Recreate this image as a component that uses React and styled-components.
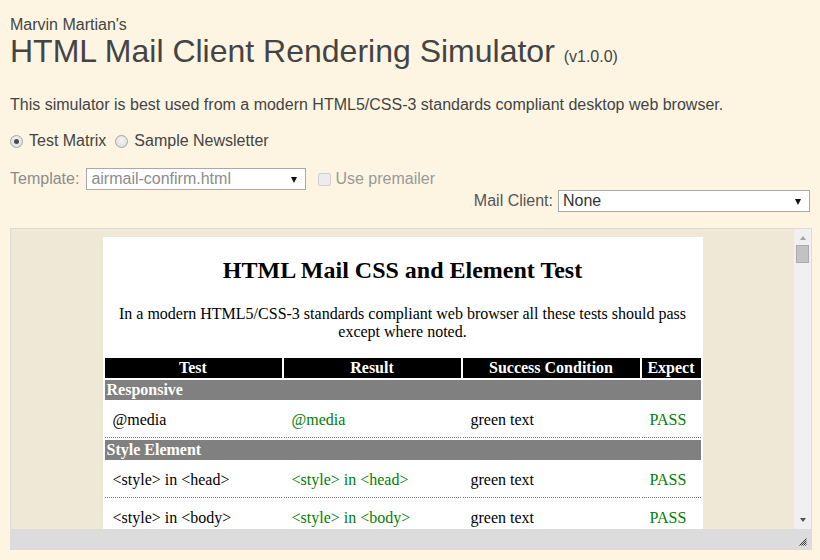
import React from "react";
import styled, { createGlobalStyle } from "styled-components";

const Global = createGlobalStyle`
  html, body { margin: 0; padding: 0; background: #fdf5e2; }
  body { font-family: "Liberation Sans", Arial, sans-serif; color: #444; }
  * { box-sizing: border-box; }
`;

const Page = styled.div`
  width: 820px;
  height: 560px;
  padding: 16px 10px 0;
  overflow: hidden;
  background: #fdf5e2;
`;

const Subtitle = styled.div`
  font-size: 16px;
  line-height: 18px;
`;

const Title = styled.h1`
  margin: 0;
  font-size: 32px;
  line-height: 34px;
  font-weight: normal;
  color: #444;
`;

const Version = styled.span`
  font-size: 16px;
`;

const Intro = styled.p`
  margin: 22px 0 0;
  font-size: 16px;
  line-height: 18px;
`;

const RadioRow = styled.div`
  margin-top: 18px;
  display: flex;
  align-items: center;
  font-size: 16px;
  line-height: 18px;
  gap: 9px;
`;

const RadioLabel = styled.label`
  display: flex;
  align-items: center;
  gap: 6px;
`;

const RadioDot = styled.span`
  width: 13px;
  height: 13px;
  border-radius: 50%;
  border: 1px solid #a6a6a6;
  background: radial-gradient(circle at 50% 40%, #f4f4f4 0%, #dadada 100%);
  display: inline-flex;
  align-items: center;
  justify-content: center;
  &::after {
    content: "";
    width: 5px;
    height: 5px;
    border-radius: 50%;
    background: ${(p) => (p.$checked ? "#4a4a4a" : "transparent")};
  }
`;

const TemplateRow = styled.div`
  margin-top: 18px;
  display: flex;
  align-items: center;
  height: 22px;
  font-size: 16px;
  line-height: 18px;
`;

const MutedLabel = styled.span`
  color: #8c8c8c;
  margin-right: 7px;
`;

const SelectBox = styled.div`
  position: relative;
  width: ${(p) => p.$w}px;
  height: 22px;
  border: 1px solid #a9a9a9;
  background: #fff;
  color: ${(p) => (p.$muted ? "#8c8c8c" : "#333")};
  font-size: 16px;
  line-height: 20px;
  padding-left: 4px;
  white-space: nowrap;
`;

const Arrow = styled.span`
  position: absolute;
  right: 8px;
  top: 8px;
  width: 0;
  height: 0;
  border-left: 3.5px solid transparent;
  border-right: 3.5px solid transparent;
  border-top: 6px solid #111;
`;

const CheckLabel = styled.label`
  display: flex;
  align-items: center;
  gap: 4px;
  margin-left: 12px;
  color: #999;
`;

const CheckBox = styled.span`
  width: 13px;
  height: 13px;
  border: 1px solid #cfcfcf;
  border-radius: 2px;
  background: #ececec;
`;

const ClientRow = styled.div`
  display: flex;
  justify-content: flex-end;
  align-items: center;
  height: 22px;
  font-size: 16px;
  line-height: 18px;
`;

const ClientLabel = styled.span`
  color: #555;
  margin-right: 5px;
`;

const Frame = styled.div`
  margin-top: 16px;
  width: 802px;
  height: 322px;
  border: 1px solid #dcdcdc;
  display: flex;
  flex-direction: column;
`;

const Viewport = styled.div`
  display: flex;
  height: 300px;
`;

const Canvas = styled.div`
  flex: 1;
  background: #efe8d6;
  padding: 8px 0 0;
  overflow: hidden;
`;

const Email = styled.div`
  width: 600px;
  margin: 0 auto;
  background: #fff;
  color: #000;
  font-family: "Liberation Serif", "Times New Roman", serif;
  padding-top: 19px;
  min-height: 300px;
`;

const EmailTitle = styled.h2`
  margin: 0 0 21px;
  font-size: 24px;
  line-height: 28px;
  font-weight: bold;
  text-align: center;
`;

const EmailIntro = styled.p`
  margin: 0 0 15px;
  font-size: 16px;
  line-height: 18px;
  text-align: center;
`;

const Table = styled.table`
  width: 600px;
  border-spacing: 2px;
  table-layout: fixed;
`;

const Th = styled.th`
  background: #000;
  color: #fff;
  font-size: 16px;
  line-height: 18px;
  padding: 1px;
  height: 20px;
  font-weight: bold;
  text-align: center;
`;

const Section = styled.td`
  background: #808080;
  color: #fff;
  font-weight: bold;
  font-size: 16px;
  line-height: 18px;
  padding: 1px 2px;
  height: 20px;
`;

const Td = styled.td`
  padding: 8px;
  font-size: 16px;
  line-height: 19px;
  border-bottom: 1px dotted #777;
  color: ${(p) => (p.$green ? "#008000" : "#000")};
  white-space: nowrap;
`;

const Scrollbar = styled.div`
  width: 17px;
  background: #f0f0f0;
  display: flex;
  flex-direction: column;
  align-items: center;
  padding-top: 7px;
`;

const ScrollArrow = styled.span`
  width: 0;
  height: 0;
  border-left: 3.5px solid transparent;
  border-right: 3.5px solid transparent;
  ${(p) =>
    p.$up
      ? "border-bottom: 4px solid #a3a3a3;"
      : "border-top: 4px solid #505050; margin-bottom: 7px;"}
`;

const Thumb = styled.span`
  margin-top: 5px;
  width: 13px;
  height: 18px;
  background: #c2c2c2;
  border: 1px solid #ababab;
`;

const Spacer = styled.span`
  flex: 1;
`;

const BottomBar = styled.div`
  height: 20px;
  background: #dcdcdc;
  display: flex;
  justify-content: flex-end;
  align-items: flex-end;
  padding: 0 4px 3px 0;
`;

const Grip = () => (
  <svg width="8" height="8" viewBox="0 0 8 8">
    <g stroke="#333" strokeWidth="1">
      <line x1="0.5" y1="7.5" x2="7.5" y2="0.5" />
      <line x1="2.5" y1="7.5" x2="7.5" y2="2.5" />
      <line x1="4.5" y1="7.5" x2="7.5" y2="4.5" />
      <line x1="6.5" y1="7.5" x2="7.5" y2="6.5" />
    </g>
  </svg>
);

const rows = [
  { section: "Responsive" },
  { test: "@media", result: "@media", cond: "green text", expect: "PASS" },
  { section: "Style Element" },
  { test: "<style> in <head>", result: "<style> in <head>", cond: "green text", expect: "PASS" },
  { test: "<style> in <body>", result: "<style> in <body>", cond: "green text", expect: "PASS" },
];

export default function App() {
  return (
    <>
      <Global />
      <Page>
        <Subtitle>Marvin Martian's</Subtitle>
        <Title>
          HTML Mail Client Rendering Simulator <Version>(v1.0.0)</Version>
        </Title>
        <Intro>
          This simulator is best used from a modern HTML5/CSS-3 standards compliant desktop web browser.
        </Intro>
        <RadioRow>
          <RadioLabel>
            <RadioDot $checked />
            Test Matrix
          </RadioLabel>
          <RadioLabel>
            <RadioDot />
            Sample Newsletter
          </RadioLabel>
        </RadioRow>
        <TemplateRow>
          <MutedLabel>Template:</MutedLabel>
          <SelectBox $w={220} $muted>
            airmail-confirm.html
            <Arrow />
          </SelectBox>
          <CheckLabel>
            <CheckBox />
            Use premailer
          </CheckLabel>
        </TemplateRow>
        <ClientRow>
          <ClientLabel>Mail Client:</ClientLabel>
          <SelectBox $w={252}>
            None
            <Arrow />
          </SelectBox>
        </ClientRow>
        <Frame>
          <Viewport>
            <Canvas>
              <Email>
                <EmailTitle>HTML Mail CSS and Element Test</EmailTitle>
                <EmailIntro>
                  In a modern HTML5/CSS-3 standards compliant web browser all these tests should pass except where noted.
                </EmailIntro>
                <Table>
                  <colgroup>
                    <col style={{ width: 177 }} />
                    <col style={{ width: 177 }} />
                    <col style={{ width: 177 }} />
                    <col style={{ width: 59 }} />
                  </colgroup>
                  <thead>
                    <tr>
                      <Th>Test</Th>
                      <Th>Result</Th>
                      <Th>Success Condition</Th>
                      <Th>Expect</Th>
                    </tr>
                  </thead>
                  <tbody>
                    {rows.map((r, i) =>
                      r.section ? (
                        <tr key={i}>
                          <Section colSpan={4}>{r.section}</Section>
                        </tr>
                      ) : (
                        <tr key={i}>
                          <Td>{r.test}</Td>
                          <Td $green>{r.result}</Td>
                          <Td>{r.cond}</Td>
                          <Td $green>{r.expect}</Td>
                        </tr>
                      )
                    )}
                  </tbody>
                </Table>
              </Email>
            </Canvas>
            <Scrollbar>
              <ScrollArrow $up />
              <Thumb />
              <Spacer />
              <ScrollArrow />
            </Scrollbar>
          </Viewport>
          <BottomBar>
            <Grip />
          </BottomBar>
        </Frame>
      </Page>
    </>
  );
}
